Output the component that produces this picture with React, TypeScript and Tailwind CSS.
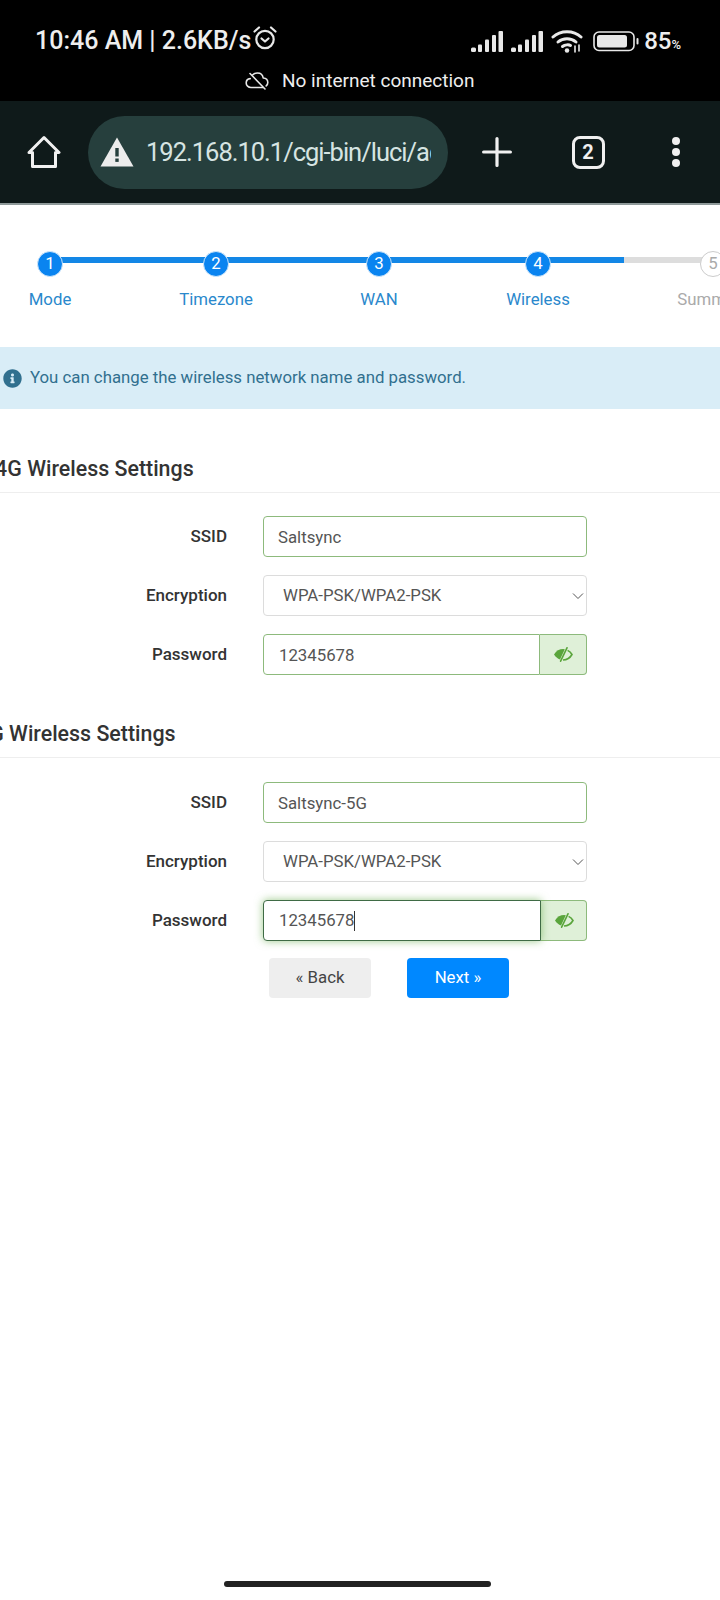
function Signal() {
  return (
    <svg width="32" height="21" viewBox="0 0 32 21" fill="#e8e8e8">
      <rect x="0" y="16.5" width="5" height="4.5" rx="1.5" />
      <rect x="7" y="13.5" width="4" height="7.5" rx="1" />
      <rect x="14" y="8.5" width="4" height="12.5" rx="1" />
      <rect x="21" y="4" width="4" height="17" rx="1" />
      <rect x="27.5" y="0" width="4.5" height="21" rx="1" />
    </svg>
  );
}

function Wifi() {
  return (
    <svg width="32" height="24" viewBox="0 0 32 24" fill="none" stroke="#e8e8e8" strokeWidth="3" strokeLinecap="round">
      <path d="M2 8 C9.5 1 22.5 1 30 8" />
      <path d="M7 13 C12 8.5 20 8.5 25 13" />
      <path d="M11.5 17.5 C14 15.5 18 15.5 19.5 16.5" />
      <path d="M16 21.5 L16 21.5" strokeWidth="4.5" />
      <path d="M24 17 V23 M28 16 V22" strokeWidth="1.6" />
    </svg>
  );
}

function Battery() {
  return (
    <svg width="46" height="21" viewBox="0 0 46 21" fill="none">
      <rect x="1" y="1" width="40" height="18.5" rx="5" stroke="#e8e8e8" strokeWidth="1.6" />
      <rect x="4" y="4" width="30" height="12.5" rx="2.5" fill="#e8e8e8" />
      <rect x="43.5" y="7" width="2" height="6.5" rx="1" fill="#e8e8e8" />
    </svg>
  );
}

function Alarm() {
  return (
    <svg width="26" height="26" viewBox="0 0 26 26" fill="none" stroke="#e8e8e8" strokeWidth="2.2" strokeLinecap="round" strokeLinejoin="round">
      <circle cx="13" cy="14.5" r="8.7" />
      <path d="M2.5 6.5 L7 2.5 M23.5 6.5 L19 2.5" />
      <path d="M9.5 13.5 L13 16.5 L16.5 13.5" />
    </svg>
  );
}

function Home() {
  return (
    <svg width="34" height="34" viewBox="0 0 34 34" fill="none" stroke="#f0f0f0" strokeWidth="3" strokeLinejoin="round" strokeLinecap="round">
      <path d="M2 17.5 L17 2.5 L32 17.5 H28.5 V31.5 H5.5 V17.5 Z" />
    </svg>
  );
}

function Warning() {
  return (
    <svg className="shrink-0" width="34" height="30" viewBox="0 0 34 30">
      <path d="M17 0.5 L33.5 29.5 H0.5 Z" fill="#ececec" />
      <rect x="15.3" y="11" width="3.4" height="8.5" fill="#263f3d" />
      <rect x="15.3" y="21.5" width="3.4" height="3.4" fill="#263f3d" />
    </svg>
  );
}

function CloudSlash() {
  return (
    <svg width="24" height="18" viewBox="0 0 24 18" fill="none" stroke="#e8e8e8" strokeWidth="1.6" strokeLinecap="round" strokeLinejoin="round">
      <path d="M7.5 3 C9 1.6 11 1 12.5 1 C15.5 1 17.8 3.2 18.2 6 C20.8 6.2 22.8 8 22.8 10.5 C22.8 12 22.2 13 21.2 13.9" />
      <path d="M18 15.5 H6 C3.2 15.5 1.2 13.5 1.2 11 C1.2 8.6 3 6.8 5.2 6.6" />
      <path d="M5 1.5 L20 17" />
    </svg>
  );
}

function EyeSlash() {
  return (
    <svg width="20" height="15" viewBox="0 0 20 15" fill="none">
      <path d="M1 7.5 C3.2 3.8 6.5 2 10.2 2 L11.8 2.2 L7 12.4 C4.6 11.6 2.6 10 1 7.5 Z" fill="#5aa53c" />
      <path d="M14.6 3.4 C16.4 4.3 17.9 5.7 19 7.5 C17 11 13.6 12.9 10 13" stroke="#5aa53c" strokeWidth="1.6" />
      <path d="M14 0.8 L7.6 14.2" stroke="#5aa53c" strokeWidth="1.6" strokeLinecap="round" />
    </svg>
  );
}

function TextInput({ value }: { value: string }) {
  return (
    <input
      readOnly
      value={value}
      className="w-[324px] h-[41px] rounded-[4px] border border-[#8dba7c] bg-white pl-[14px] text-[16.8px] text-[#555555] outline-none"
    />
  );
}

function Select() {
  return (
    <div className="relative w-[324px] h-[41px]">
      <select className="w-full h-full appearance-none rounded-[4px] border border-[#dcdcdc] bg-white pl-[19px] text-[16.8px] text-[#555555] outline-none">
        <option>WPA-PSK/WPA2-PSK</option>
      </select>
      <svg className="absolute right-[3px] top-[17px]" width="12" height="8" viewBox="0 0 12 8" fill="none" stroke="#555555" strokeWidth="1">
        <path d="M1 1.5 L6 6.5 L11 1.5" />
      </svg>
    </div>
  );
}

function Row({ label, mt, children }: { label: string; mt: string; children: React.ReactNode }) {
  return (
    <div className={`flex items-center ${mt}`}>
      <label className="w-[227px] text-right text-[17px] font-medium text-[#333333]">{label}</label>
      <div className="ml-[36px] flex">{children}</div>
    </div>
  );
}

const steps = [
  { n: "1", label: "Mode", w: "w-[100px]", active: true },
  { n: "2", label: "Timezone", w: "w-[232px]", active: true },
  { n: "3", label: "WAN", w: "w-[94px]", active: true },
  { n: "4", label: "Wireless", w: "w-[224px]", active: true },
  { n: "5", label: "Summary", w: "w-[126px]", active: false },
];

export default function App() {
  return (
    <div className="w-[720px] h-[1600px] overflow-hidden bg-white flex flex-col font-['Roboto',sans-serif]">
      <header className="h-[101px] bg-black text-[#eeeeee] shrink-0">
        <div className="flex items-center justify-between pl-[35px] pr-[39px] pt-[26px] h-[56px]">
          <div className="flex items-center">
            <span className="text-[25px] leading-[28px] font-medium whitespace-nowrap">10:46 AM | 2.6KB/s</span>
            <span className="-mt-[6px] ml-[1px]"><Alarm /></span>
          </div>
          <div className="flex items-center">
            <Signal />
            <span className="w-[8px]" />
            <Signal />
            <span className="w-[8px]" />
            <Wifi />
            <span className="w-[10px]" />
            <Battery />
            <span className="w-[5px]" />
            <span className="mt-[4px] text-[24px] leading-[28px] font-medium">85<span className="text-[13px]">%</span></span>
          </div>
        </div>
        <div className="flex items-center pl-[245px] pt-[14px] gap-[13px]">
          <CloudSlash />
          <span className="text-[19px] leading-[22px] whitespace-nowrap">No internet connection</span>
        </div>
      </header>

      <nav className="h-[104px] shrink-0 bg-[#0f1a1a] border-b-2 border-b-[#8f9a9a] flex items-center">
        <div className="w-[88px] flex justify-center"><Home /></div>
        <div className="w-[360px] h-[73px] rounded-full bg-[#263f3d] flex items-center pl-[12px] pr-[17px]">
          <Warning />
          <span className="ml-[12px] overflow-hidden whitespace-nowrap text-[25.5px] tracking-[-1px] text-[#d6e4e2]">192.168.10.1/cgi-bin/luci/admin</span>
        </div>
        <div className="w-[98px] flex justify-center">
          <svg width="30" height="30" viewBox="0 0 30 30" stroke="#f0f0f0" strokeWidth="3.2" strokeLinecap="round">
            <path d="M15 1.6 V28.4 M1.6 15 H28.4" />
          </svg>
        </div>
        <div className="w-[84px] flex justify-center">
          <div className="w-[33px] h-[33px] rounded-[8px] border-[3px] border-[#f0f0f0] flex items-center justify-center text-[20px] font-bold text-[#f0f0f0]">2</div>
        </div>
        <div className="ml-[42px] flex flex-col gap-[3px]">
          <span className="w-[8px] h-[8px] rounded-full bg-[#f0f0f0]" />
          <span className="w-[8px] h-[8px] rounded-full bg-[#f0f0f0]" />
          <span className="w-[8px] h-[8px] rounded-full bg-[#f0f0f0]" />
        </div>
      </nav>

      <div className="relative flex pt-[46px] h-[142px] w-[776px] shrink-0">
        <div className="absolute left-[50px] top-[52px] h-[6px] w-[574px] bg-[#1387e6]" />
        <div className="absolute left-[624px] top-[52px] h-[6px] w-[80px] bg-[#dddddd]" />
        {steps.map((s) => (
          <div key={s.n} className={`relative ${s.w} flex flex-col items-center`}>
            <div
              className={
                s.active
                  ? "w-[26px] h-[26px] rounded-full bg-[#0a84f0] border border-[#cfe6fa] text-white text-[16.8px] flex items-center justify-center"
                  : "w-[26px] h-[26px] rounded-full bg-white border border-[#cccccc] text-[#aaaaaa] text-[16.8px] flex items-center justify-center"
              }
            >
              {s.n}
            </div>
            <span className={s.active ? "mt-[11px] text-[16.8px] leading-[22px] text-[#2a88cc]" : "mt-[11px] text-[16.8px] leading-[22px] text-[#aaaaaa]"}>{s.label}</span>
          </div>
        ))}
      </div>

      <div className="h-[62px] shrink-0 bg-[#d9edf7] flex items-center pl-[3px] text-[16.8px] text-[#31708f]">
        <svg className="shrink-0" width="19" height="19" viewBox="0 0 512 512" fill="#31708f">
          <path d="M256 8C119 8 8 119 8 256s111 248 248 248 248-111 248-248S393 8 256 8zm0 110c23 0 42 19 42 42s-19 42-42 42-42-19-42-42 19-42 42-42zm56 254c0 7-5 12-12 12h-88c-7 0-12-5-12-12v-24c0-7 5-12 12-12h12v-64h-12c-7 0-12-5-12-12v-24c0-7 5-12 12-12h64c7 0 12 5 12 12v100h12c7 0 12 5 12 12v24z" />
        </svg>
        <span className="ml-[8px] whitespace-nowrap">You can change the wireless network name and password.</span>
      </div>

      <h3 className="mt-[48px] h-[36px] -ml-[23px] border-b border-[#eeeeee] text-[21.4px] font-medium leading-[24px] text-[#333333] whitespace-nowrap">2.4G Wireless Settings</h3>
      <div className="pt-[23px] flex flex-col">
        <Row label="SSID" mt=""><TextInput value="Saltsync" /></Row>
        <Row label="Encryption" mt="mt-[18px]"><Select /></Row>
        <Row label="Password" mt="mt-[18px]">
          <input readOnly value="12345678" className="w-[277px] h-[41px] rounded-l-[4px] border border-[#8dba7c] bg-white pl-[15px] text-[16.8px] text-[#555555] outline-none" />
          <div className="w-[47px] h-[41px] flex items-center justify-center rounded-r-[4px] border border-l-0 border-[#8dba7c] bg-[#dff0d8]">
            <EyeSlash />
          </div>
        </Row>
      </div>

      <h3 className="mt-[47px] h-[36px] -ml-[23px] border-b border-[#eeeeee] text-[21.4px] font-medium leading-[24px] text-[#333333] whitespace-nowrap">5G Wireless Settings</h3>
      <div className="pt-[24px] flex flex-col">
        <Row label="SSID" mt=""><TextInput value="Saltsync-5G" /></Row>
        <Row label="Encryption" mt="mt-[18px]"><Select /></Row>
        <Row label="Password" mt="mt-[18px]">
          <div className="relative z-10 w-[278px] h-[41px] rounded-l-[4px] border border-[#3f6b45] bg-white pl-[15px] text-[16.8px] text-[#555555] shadow-[0_0_8px_rgba(90,165,60,0.6)] flex items-center">
            12345678<span className="inline-block w-[1px] h-[20px] bg-[#333333]" />
          </div>
          <div className="w-[46px] h-[41px] flex items-center justify-center rounded-r-[4px] border border-l-0 border-[#8dba7c] bg-[#dff0d8]">
            <EyeSlash />
          </div>
        </Row>
      </div>

      <div className="mt-[17px] flex pl-[269px] gap-[36px]">
        <button className="w-[102px] h-[40px] rounded-[4px] bg-[#eeeeee] text-[16.8px] text-[#444444]">« Back</button>
        <button className="w-[102px] h-[40px] rounded-[4px] bg-[#0088ff] text-[16.8px] text-white">Next »</button>
      </div>

      <div className="mt-auto mb-[13px] flex justify-center pr-[5px]">
        <div className="w-[267px] h-[6px] rounded-full bg-[#222222]" />
      </div>
    </div>
  );
}
